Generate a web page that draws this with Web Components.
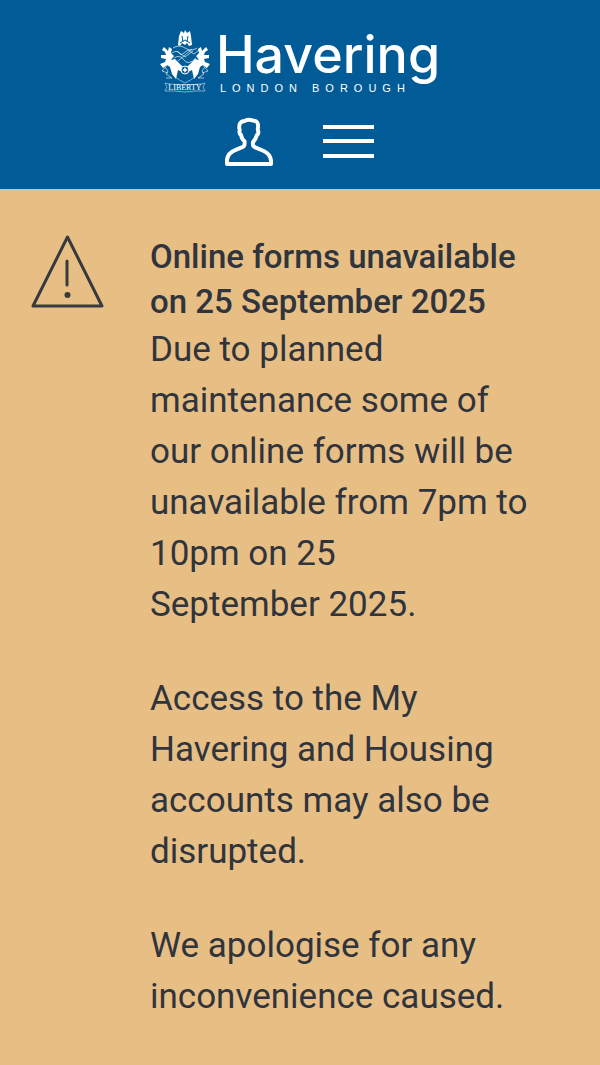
<!DOCTYPE html>
<html lang="en">

<head>
  <meta charset="UTF-8">
  <meta name="viewport" content="width=device-width, initial-scale=1.0">
  <title>Havering London Borough</title>
  <style>
    body {
      margin: 0;
      min-height: 100vh;
      background: #e7bf85;
      color: #30343d;
      font-family: Roboto, "Noto Sans", sans-serif;
    }
  </style>
</head>

<body>
  <template id="site-header">
    <style>
      :host {
        display: flex;
        flex-direction: column;
        align-items: center;
        gap: 22px;
        padding: 29px 16px 22px;
        background: #005b97;
        color: #fff;
      }

      nav {
        display: flex;
        align-items: center;
        gap: 50px;
      }

      button {
        display: block;
        padding: 0;
        border: 0;
        background: none;
        color: inherit;
        cursor: pointer;
      }

      svg {
        display: block;
      }
    </style>
    <slot></slot>
    <nav aria-label="Main">
      <button type="button" aria-label="My account">
        <svg width="48" height="50" viewBox="1 0 49 50" fill="none" stroke="currentColor" stroke-width="4" stroke-linejoin="round">
          <path d="M3 47.500V43Q4 36 12 33L18 30.500Q21 29.500 21 27V24Q18 22 17.500 18Q15 16 16 13Q14 4 21 3.500Q25 1.500 29 3Q36 3 34.500 11V13Q36 16 33.500 18Q32 23 29.500 25V28Q30 30 33 31L40 34Q47 37 48 44V47.500Z" />
        </svg>
      </button>
      <button type="button" aria-label="Menu">
        <svg width="52" height="50" viewBox="0 0 52 50" fill="currentColor">
          <path d="M0 8H51V12H0ZM0 22H51V26H0ZM0 37H51V41H0Z" />
        </svg>
      </button>
    </nav>
  </template>

  <template id="site-logo">
    <style>
      :host {
        display: block;
      }

      a {
        display: flex;
        gap: 6px;
        color: inherit;
        text-decoration: none;
      }

      svg {
        display: block;
      }

      .words {
        display: flex;
        flex-direction: column;
        gap: 1px;
      }

      .name {
        font: 500 52px/52px Inter, "Noto Sans", sans-serif;
      }

      .kind {
        padding-left: 4px;
        font: 11px/13px "Liberation Sans", Arial, sans-serif;
        letter-spacing: 6px;
      }
    </style>
    <a href="#">
      <svg width="50" height="64" viewBox="0 0 50 64" fill="currentColor" aria-hidden="true">
        <!-- crest -->
        <path d="M18 16L19 7 21 2 24 4 25 1 27 4 30 2 31 7 32 16 29 17 27 14 25 16 22 14 20 17Z" />
        <path d="M22 7L23 13M28 7L27 13M20 14L25 11 30 14" fill="none" stroke="#005b97" />
        <!-- mantling -->
        <path d="M13 19Q19 15 25 19T37 19M12 24Q17 20 21 26L28 21 34 25 39 21M14 29Q20 25 24 31T36 29M17 22L25 28 33 22M18 32L32 20" fill="none" stroke="currentColor" opacity=".65" />
        <!-- supporters -->
        <g>
          <path d="M4 18L8 22 9 18 12 20 11 24 14 27 11 31 15 30 20 35 24 39 22 43 18 41 16 50 12 45 10 38 7 36 3 39 0 35 5 33 6 30 1 29 1 26 6 26 5 23 2 21Z" />
          <path d="M5 38L8 42 6 45 12 49 6 49M8 35L2 42 8 44" fill="none" stroke="currentColor" opacity=".6" />
        </g>
        <g transform="matrix(-1 0 0 1 50 0)">
          <path d="M4 18L8 22 9 18 12 20 11 24 14 27 11 31 15 30 20 35 24 39 22 43 18 41 16 50 12 45 10 38 7 36 3 39 0 35 5 33 6 30 1 29 1 26 6 26 5 23 2 21Z" />
          <path d="M5 38L8 42 6 45 12 49 6 49M8 35L2 42 8 44" fill="none" stroke="currentColor" opacity=".6" />
        </g>
        <circle cx="25" cy="41" r="4" fill="#005b97" stroke="currentColor" />
        <path d="M25 38L26 40 28 41 26 42 25 44 24 42 22 41 24 40Z" />
        <path d="M15 48Q19 51 25 54Q31 51 35 48" fill="none" stroke="currentColor" opacity=".5" />
        <!-- motto scroll -->
        <path d="M9 55Q25 57 41 55L45 54 43 58 45 62H36Q25 64 14 62H5L7 58 5 54Z" fill="none" stroke="currentColor" stroke-width=".7" opacity=".7" />
        <text x="25" y="61" text-anchor="middle" font-family="Liberation Serif" font-size="8">LIBERTY</text>
      </svg>
      <span class="words">
        <span class="name">Havering</span>
        <span class="kind">LONDON BOROUGH</span>
      </span>
    </a>
  </template>

  <template id="alert-banner">
    <style>
      :host {
        display: flex;
        align-items: flex-start;
        gap: 46px;
        padding: 45px 60px 44px 31px;
      }

      svg {
        flex: none;
        display: block;
      }

      .content {
        flex: 1;
        min-width: 0;
      }

      ::slotted(h2) {
        margin: 0;
        font-size: 33px;
        font-weight: 500;
        line-height: 45px;
      }

      ::slotted(p) {
        margin: 0 0 43px;
        font-size: 35px;
        line-height: 51px;
      }
    </style>
    <svg width="73" height="74" viewBox="0 0 73 74" fill="none" stroke="#373a3f" stroke-width="3" stroke-linecap="round" stroke-linejoin="round" aria-hidden="true">
      <path d="M36.500 3L71 72H2ZM36 27V51" />
      <circle cx="36.500" cy="61" r="3" fill="#373a3f" stroke="none" />
    </svg>
    <div class="content">
      <slot></slot>
    </div>
  </template>

  <site-header>
    <site-logo></site-logo>
  </site-header>
  <main>
    <alert-banner>
      <h2>Online forms unavailable on 25 September 2025</h2>
      <p>Due to planned maintenance some of our online forms will be unavailable from 7pm to 10pm on 25 September&nbsp;2025.</p>
      <p>Access to the My Havering and Housing accounts may also be disrupted.</p>
      <p>We apologise for any inconvenience caused.</p>
    </alert-banner>
  </main>
</body>
<script>
  class TemplateElement extends HTMLElement {
    constructor() {
      super();
      const shadowRoot = this.attachShadow({ mode: 'open' });
      const template = document.getElementById(this.localName);
      shadowRoot.appendChild(template.content.cloneNode(true));
    }
  }

  class SiteHeader extends TemplateElement {}
  class SiteLogo extends TemplateElement {}
  class AlertBanner extends TemplateElement {}

  window.customElements.define("site-header", SiteHeader)
  window.customElements.define("site-logo", SiteLogo)
  window.customElements.define("alert-banner", AlertBanner)
</script>

</html>
